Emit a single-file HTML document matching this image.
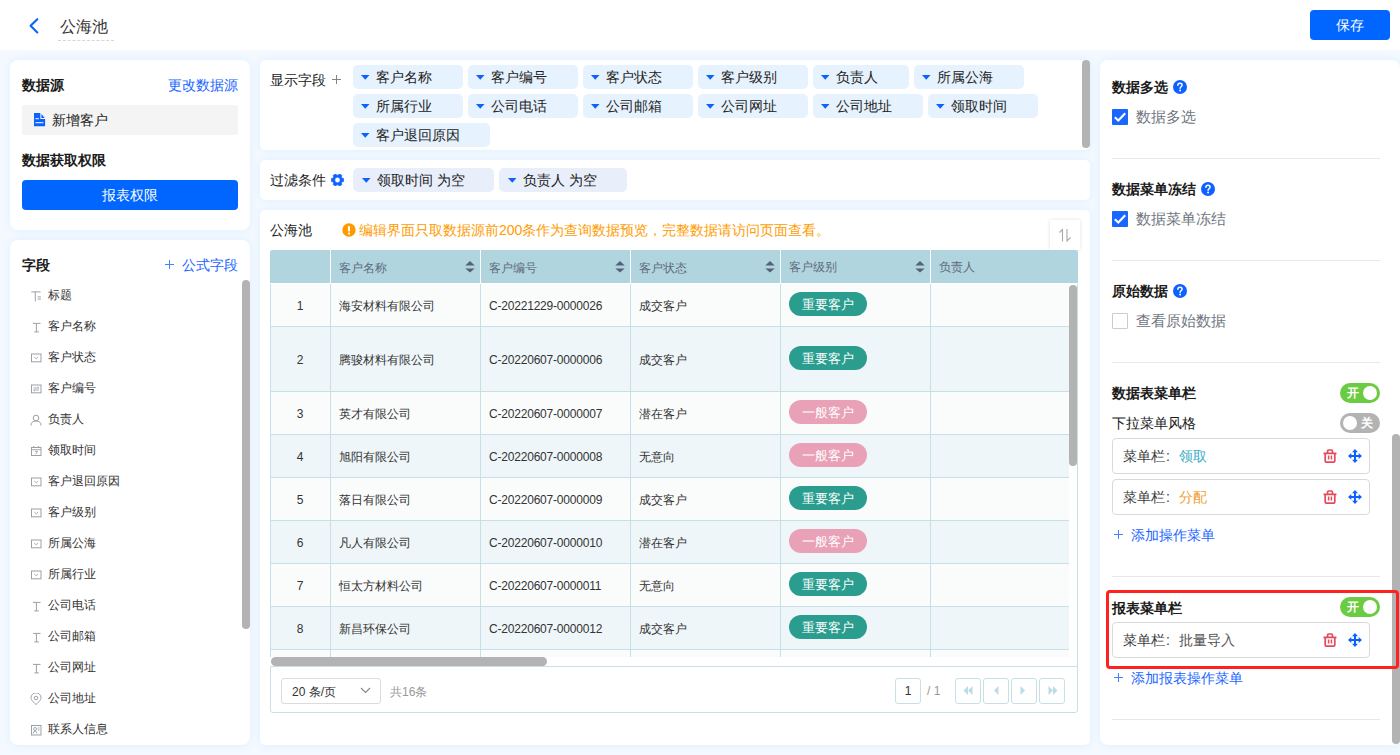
<!DOCTYPE html>
<html><head><meta charset="utf-8">
<style>
*{box-sizing:border-box;margin:0;padding:0}
html,body{width:1400px;height:755px;overflow:hidden}
body{background:#f3f9ff;font-family:"Liberation Sans",sans-serif;color:#333;position:relative}
.abs{position:absolute}
.t{position:absolute;white-space:nowrap;line-height:1}
#hdr{position:absolute;left:0;top:0;width:1400px;height:50px;background:#fff}
.code{letter-spacing:-0.2px}
.panel{position:absolute;background:#fff;box-shadow:0 0 8px rgba(0,140,255,0.09)}
</style></head><body>
<div id="hdr">
  <svg class="abs" style="left:27px;top:16px" width="14" height="19" viewBox="0 0 14 19"><path d="M10.3 3.2 L3.6 9.8 L10.3 16.4" fill="none" stroke="#0d62fe" stroke-width="2.1" stroke-linecap="round" stroke-linejoin="round"/></svg>
  <div class="t" style="left:60px;top:19px;font-size:16px;color:#333">公海池</div>
  <div class="abs" style="left:58px;top:40px;width:56px;height:0;border-top:1px dashed #d6d6d6"></div>
  <div class="abs" style="left:1310px;top:10px;width:80px;height:30px;background:#0066ff;border-radius:4px"></div>
  <div class="t" style="left:1336px;top:18px;font-size:14px;color:#fff">保存</div>
</div>

<!-- left panel 1 -->
<div class="panel" style="left:10px;top:60px;width:240px;height:170px;border-radius:8px"></div>
<!-- left panel 2 -->
<div class="panel" style="left:10px;top:240px;width:240px;height:505px;border-radius:8px"></div>
<!-- display fields -->
<div class="panel" style="left:260px;top:60px;width:830px;height:90px;border-radius:5px"></div>
<!-- filter -->
<div class="panel" style="left:260px;top:160px;width:830px;height:40px;border-radius:5px"></div>
<!-- table panel -->
<div class="panel" style="left:260px;top:210px;width:830px;height:535px;border-radius:5px"></div>
<!-- right panel -->
<div class="panel" style="left:1100px;top:60px;width:300px;height:685px;border-radius:8px"></div>


<!-- left panel 1 content -->
<div class="t" style="left:22px;top:78px;font-size:14px;font-weight:bold;color:#1a1a1a">数据源</div>
<div class="t" style="left:168px;top:78px;font-size:14px;color:#1a66ff">更改数据源</div>
<div class="abs" style="left:22px;top:105px;width:216px;height:30px;background:#f4f4f4;border-radius:2px"></div>
<svg class="abs" style="left:33.7px;top:112.8px" width="12" height="14" viewBox="0 0 12 14"><path d="M0 0 H6.3 V5.9 H11.1 V13.3 H0 Z" fill="#0d62fe"/><path d="M7.4 0.9 L10.7 4.9 H7.4 Z" fill="#0d62fe"/><rect x="1.4" y="5.2" width="3.5" height="1" fill="#fff"/><rect x="1.4" y="9.2" width="8" height="1" fill="#fff"/></svg>
<div class="t" style="left:52px;top:113px;font-size:14px;color:#222">新增客户</div>
<div class="t" style="left:22px;top:153px;font-size:14px;font-weight:bold;color:#1a1a1a">数据获取权限</div>
<div class="abs" style="left:22px;top:180px;width:216px;height:30px;background:#0066ff;border-radius:4px"></div>
<div class="t" style="left:102px;top:188px;font-size:14px;color:#fff">报表权限</div>
<!-- left panel 2 content -->
<div class="t" style="left:22px;top:258px;font-size:14px;font-weight:bold;color:#1a1a1a">字段</div>
<svg class="abs" style="left:165px;top:260px" width="9" height="9" viewBox="0 0 9 9"><path d="M4.5 0 V9 M0 4.5 H9" stroke="#4680ff" stroke-width="1"/></svg><div class="t" style="left:182px;top:258px;font-size:14px;color:#1a66ff">公式字段</div>
<div class="abs" style="left:242px;top:280px;width:8px;height:349px;background:#b3b3b3;border-radius:4px"></div>
<svg class="abs" style="left:30px;top:289.5px" width="12" height="12" viewBox="0 0 12 12"><path d="M1.3 1.9 H10.5 M5.3 1.9 V11.4 M7.6 6.9 H10.9 M7.6 9.1 H10.9" stroke="#9aa0a8" stroke-width="1" fill="none"/></svg><div class="t" style="left:48px;top:289.0px;font-size:12px;color:#333">标题</div>
<svg class="abs" style="left:30px;top:320.5px" width="12" height="12" viewBox="0 0 12 12"><path d="M3 2.4 H10.5 M6.4 2.4 V10.9 M4.3 10.9 H8.9" stroke="#9aa0a8" stroke-width="1" fill="none"/></svg><div class="t" style="left:48px;top:320.0px;font-size:12px;color:#333">客户名称</div>
<svg class="abs" style="left:30px;top:351.5px" width="12" height="12" viewBox="0 0 12 12"><rect x="1.5" y="2" width="9.5" height="7.8" stroke="#9aa0a8" stroke-width="1" fill="none"/><path d="M4.3 5 L6.25 6.8 L8.2 5" stroke="#9aa0a8" stroke-width="0.9" fill="none"/></svg><div class="t" style="left:48px;top:351.0px;font-size:12px;color:#333">客户状态</div>
<svg class="abs" style="left:30px;top:382.5px" width="12" height="12" viewBox="0 0 12 12"><rect x="1.5" y="2" width="9.5" height="7.8" stroke="#9aa0a8" stroke-width="1" fill="none"/><path d="M3.5 5 H9 L7.6 3.8 M9 7 H3.5 L4.9 8.2" stroke="#9aa0a8" stroke-width="0.9" fill="none"/></svg><div class="t" style="left:48px;top:382.0px;font-size:12px;color:#333">客户编号</div>
<svg class="abs" style="left:30px;top:413.5px" width="12" height="12" viewBox="0 0 12 12"><circle cx="6" cy="4" r="2.8" stroke="#9aa0a8" stroke-width="1" fill="none"/><path d="M1 11.5 Q1 7 6 7 Q11 7 11 11.5" stroke="#9aa0a8" stroke-width="1" fill="none"/></svg><div class="t" style="left:48px;top:413.0px;font-size:12px;color:#333">负责人</div>
<svg class="abs" style="left:30px;top:444.5px" width="12" height="12" viewBox="0 0 12 12"><rect x="1.5" y="2.5" width="9.5" height="8" stroke="#9aa0a8" stroke-width="1" fill="none"/><path d="M1.5 4.7 H11 M3.8 1 V3 M8.7 1 V3 M4.8 6.3 H7.5 L5.8 9.3" stroke="#9aa0a8" stroke-width="0.9" fill="none"/></svg><div class="t" style="left:48px;top:444.0px;font-size:12px;color:#333">领取时间</div>
<svg class="abs" style="left:30px;top:475.5px" width="12" height="12" viewBox="0 0 12 12"><rect x="1.5" y="2" width="9.5" height="7.8" stroke="#9aa0a8" stroke-width="1" fill="none"/><path d="M4.3 5 L6.25 6.8 L8.2 5" stroke="#9aa0a8" stroke-width="0.9" fill="none"/></svg><div class="t" style="left:48px;top:475.0px;font-size:12px;color:#333">客户退回原因</div>
<svg class="abs" style="left:30px;top:506.5px" width="12" height="12" viewBox="0 0 12 12"><rect x="1.5" y="2" width="9.5" height="7.8" stroke="#9aa0a8" stroke-width="1" fill="none"/><path d="M4.3 5 L6.25 6.8 L8.2 5" stroke="#9aa0a8" stroke-width="0.9" fill="none"/></svg><div class="t" style="left:48px;top:506.0px;font-size:12px;color:#333">客户级别</div>
<svg class="abs" style="left:30px;top:537.5px" width="12" height="12" viewBox="0 0 12 12"><rect x="1.5" y="2" width="9.5" height="7.8" stroke="#9aa0a8" stroke-width="1" fill="none"/><path d="M4.3 5 L6.25 6.8 L8.2 5" stroke="#9aa0a8" stroke-width="0.9" fill="none"/></svg><div class="t" style="left:48px;top:537.0px;font-size:12px;color:#333">所属公海</div>
<svg class="abs" style="left:30px;top:568.5px" width="12" height="12" viewBox="0 0 12 12"><rect x="1.5" y="2" width="9.5" height="7.8" stroke="#9aa0a8" stroke-width="1" fill="none"/><path d="M4.3 5 L6.25 6.8 L8.2 5" stroke="#9aa0a8" stroke-width="0.9" fill="none"/></svg><div class="t" style="left:48px;top:568.0px;font-size:12px;color:#333">所属行业</div>
<svg class="abs" style="left:30px;top:599.5px" width="12" height="12" viewBox="0 0 12 12"><path d="M3 2.4 H10.5 M6.4 2.4 V10.9 M4.3 10.9 H8.9" stroke="#9aa0a8" stroke-width="1" fill="none"/></svg><div class="t" style="left:48px;top:599.0px;font-size:12px;color:#333">公司电话</div>
<svg class="abs" style="left:30px;top:630.5px" width="12" height="12" viewBox="0 0 12 12"><path d="M3 2.4 H10.5 M6.4 2.4 V10.9 M4.3 10.9 H8.9" stroke="#9aa0a8" stroke-width="1" fill="none"/></svg><div class="t" style="left:48px;top:630.0px;font-size:12px;color:#333">公司邮箱</div>
<svg class="abs" style="left:30px;top:661.5px" width="12" height="12" viewBox="0 0 12 12"><path d="M3 2.4 H10.5 M6.4 2.4 V10.9 M4.3 10.9 H8.9" stroke="#9aa0a8" stroke-width="1" fill="none"/></svg><div class="t" style="left:48px;top:661.0px;font-size:12px;color:#333">公司网址</div>
<svg class="abs" style="left:30px;top:692.5px" width="12" height="12" viewBox="0 0 12 12"><path d="M6 11.5 C2 8 1 6 1 4.8 A5 5 0 0 1 11 4.8 C11 6 10 8 6 11.5 Z" stroke="#9aa0a8" stroke-width="1" fill="none"/><circle cx="6" cy="5" r="1.8" stroke="#9aa0a8" stroke-width="1" fill="none"/></svg><div class="t" style="left:48px;top:692.0px;font-size:12px;color:#333">公司地址</div>
<svg class="abs" style="left:30px;top:723.5px" width="12" height="12" viewBox="0 0 12 12"><rect x="1.5" y="1.5" width="9.5" height="9.5" stroke="#9aa0a8" stroke-width="1" fill="none"/><circle cx="5" cy="5" r="1.5" stroke="#9aa0a8" stroke-width="0.9" fill="none"/><path d="M3 9.5 Q3.3 7.3 5 7.3 Q6.7 7.3 7 9.5 M7.6 4 H9.5 M7.6 6 H9.5" stroke="#9aa0a8" stroke-width="0.9" fill="none"/></svg><div class="t" style="left:48px;top:723.0px;font-size:12px;color:#333">联系人信息</div>

<!-- display fields content -->
<div class="t" style="left:270px;top:73px;font-size:14px;color:#222">显示字段</div>
<svg class="abs" style="left:332px;top:75px" width="9" height="9" viewBox="0 0 9 9"><path d="M4.5 0 V9 M0 4.5 H9" stroke="#777" stroke-width="0.9"/></svg>
<div class="abs" style="left:1082px;top:60px;width:8px;height:88px;background:#b3b3b3;border-radius:4px"></div>
<div class="abs" style="left:353px;top:65px;width:110px;height:24px;background:#e6f2fe;border-radius:5px"></div><svg class="abs" style="left:361px;top:75px" width="9" height="5" viewBox="0 0 9 5"><path d="M0 0 H8.5 L4.25 4.8 Z" fill="#0d62fe"/></svg><div class="t" style="left:376px;top:70px;font-size:14px;color:#222">客户名称</div>
<div class="abs" style="left:468px;top:65px;width:110px;height:24px;background:#e6f2fe;border-radius:5px"></div><svg class="abs" style="left:476px;top:75px" width="9" height="5" viewBox="0 0 9 5"><path d="M0 0 H8.5 L4.25 4.8 Z" fill="#0d62fe"/></svg><div class="t" style="left:491px;top:70px;font-size:14px;color:#222">客户编号</div>
<div class="abs" style="left:583px;top:65px;width:110px;height:24px;background:#e6f2fe;border-radius:5px"></div><svg class="abs" style="left:591px;top:75px" width="9" height="5" viewBox="0 0 9 5"><path d="M0 0 H8.5 L4.25 4.8 Z" fill="#0d62fe"/></svg><div class="t" style="left:606px;top:70px;font-size:14px;color:#222">客户状态</div>
<div class="abs" style="left:698px;top:65px;width:110px;height:24px;background:#e6f2fe;border-radius:5px"></div><svg class="abs" style="left:706px;top:75px" width="9" height="5" viewBox="0 0 9 5"><path d="M0 0 H8.5 L4.25 4.8 Z" fill="#0d62fe"/></svg><div class="t" style="left:721px;top:70px;font-size:14px;color:#222">客户级别</div>
<div class="abs" style="left:813px;top:65px;width:96px;height:24px;background:#e6f2fe;border-radius:5px"></div><svg class="abs" style="left:821px;top:75px" width="9" height="5" viewBox="0 0 9 5"><path d="M0 0 H8.5 L4.25 4.8 Z" fill="#0d62fe"/></svg><div class="t" style="left:836px;top:70px;font-size:14px;color:#222">负责人</div>
<div class="abs" style="left:914px;top:65px;width:110px;height:24px;background:#e6f2fe;border-radius:5px"></div><svg class="abs" style="left:922px;top:75px" width="9" height="5" viewBox="0 0 9 5"><path d="M0 0 H8.5 L4.25 4.8 Z" fill="#0d62fe"/></svg><div class="t" style="left:937px;top:70px;font-size:14px;color:#222">所属公海</div>
<div class="abs" style="left:353px;top:94px;width:110px;height:24px;background:#e6f2fe;border-radius:5px"></div><svg class="abs" style="left:361px;top:104px" width="9" height="5" viewBox="0 0 9 5"><path d="M0 0 H8.5 L4.25 4.8 Z" fill="#0d62fe"/></svg><div class="t" style="left:376px;top:99px;font-size:14px;color:#222">所属行业</div>
<div class="abs" style="left:468px;top:94px;width:110px;height:24px;background:#e6f2fe;border-radius:5px"></div><svg class="abs" style="left:476px;top:104px" width="9" height="5" viewBox="0 0 9 5"><path d="M0 0 H8.5 L4.25 4.8 Z" fill="#0d62fe"/></svg><div class="t" style="left:491px;top:99px;font-size:14px;color:#222">公司电话</div>
<div class="abs" style="left:583px;top:94px;width:110px;height:24px;background:#e6f2fe;border-radius:5px"></div><svg class="abs" style="left:591px;top:104px" width="9" height="5" viewBox="0 0 9 5"><path d="M0 0 H8.5 L4.25 4.8 Z" fill="#0d62fe"/></svg><div class="t" style="left:606px;top:99px;font-size:14px;color:#222">公司邮箱</div>
<div class="abs" style="left:698px;top:94px;width:110px;height:24px;background:#e6f2fe;border-radius:5px"></div><svg class="abs" style="left:706px;top:104px" width="9" height="5" viewBox="0 0 9 5"><path d="M0 0 H8.5 L4.25 4.8 Z" fill="#0d62fe"/></svg><div class="t" style="left:721px;top:99px;font-size:14px;color:#222">公司网址</div>
<div class="abs" style="left:813px;top:94px;width:110px;height:24px;background:#e6f2fe;border-radius:5px"></div><svg class="abs" style="left:821px;top:104px" width="9" height="5" viewBox="0 0 9 5"><path d="M0 0 H8.5 L4.25 4.8 Z" fill="#0d62fe"/></svg><div class="t" style="left:836px;top:99px;font-size:14px;color:#222">公司地址</div>
<div class="abs" style="left:928px;top:94px;width:110px;height:24px;background:#e6f2fe;border-radius:5px"></div><svg class="abs" style="left:936px;top:104px" width="9" height="5" viewBox="0 0 9 5"><path d="M0 0 H8.5 L4.25 4.8 Z" fill="#0d62fe"/></svg><div class="t" style="left:951px;top:99px;font-size:14px;color:#222">领取时间</div>
<div class="abs" style="left:353px;top:123px;width:137px;height:24px;background:#e6f2fe;border-radius:5px"></div><svg class="abs" style="left:361px;top:133px" width="9" height="5" viewBox="0 0 9 5"><path d="M0 0 H8.5 L4.25 4.8 Z" fill="#0d62fe"/></svg><div class="t" style="left:376px;top:128px;font-size:14px;color:#222">客户退回原因</div>

<div class="t" style="left:270px;top:173px;font-size:14px;color:#222">过滤条件</div>
<svg class="abs" style="left:331px;top:174px" width="13" height="12" viewBox="0 0 13 12"><path fill="#0d62fe" fill-rule="evenodd" stroke="#0d62fe" stroke-width="0.6" stroke-linejoin="round" d="M11.04 4.16 L12.71 4.45 L12.71 7.55 L11.04 7.84 L10.36 9.02 L10.95 10.60 L8.26 12.15 L7.18 10.85 L5.82 10.85 L4.74 12.15 L2.05 10.60 L2.64 9.02 L1.96 7.84 L0.29 7.55 L0.29 4.45 L1.96 4.16 L2.64 2.98 L2.05 1.40 L4.74 -0.15 L5.82 1.15 L7.18 1.15 L8.26 -0.15 L10.95 1.40 L10.36 2.98 Z M6.5 3.3 A2.7 2.7 0 1 0 6.5 8.7 A2.7 2.7 0 1 0 6.5 3.3 Z"/></svg>
<div class="abs" style="left:353px;top:168px;width:141px;height:24px;background:#e8eefa;border-radius:5px"></div><svg class="abs" style="left:362px;top:178px" width="9" height="5" viewBox="0 0 9 5"><path d="M0 0 H8.5 L4.25 4.8 Z" fill="#0d62fe"/></svg><div class="t" style="left:377px;top:173px;font-size:14px;color:#222">领取时间 为空</div>
<div class="abs" style="left:499px;top:168px;width:128px;height:24px;background:#e8eefa;border-radius:5px"></div><svg class="abs" style="left:508px;top:178px" width="9" height="5" viewBox="0 0 9 5"><path d="M0 0 H8.5 L4.25 4.8 Z" fill="#0d62fe"/></svg><div class="t" style="left:523px;top:173px;font-size:14px;color:#222">负责人 为空</div>

<!-- table panel content -->
<div class="t" style="left:270px;top:223px;font-size:14px;color:#222">公海池</div>
<svg class="abs" style="left:342px;top:223px" width="14" height="14" viewBox="0 0 14 14"><circle cx="7" cy="7" r="6.7" fill="#ff9a00"/><rect x="6" y="3" width="2" height="5.5" rx="0.8" fill="#fff"/><circle cx="7" cy="10.6" r="1.1" fill="#fff"/></svg>
<div class="t" style="left:359px;top:223px;font-size:14px;color:#ff9c00">编辑界面只取数据源前200条作为查询数据预览，完整数据请访问页面查看。</div>
<div class="abs" style="left:1050px;top:220px;width:30px;height:30px;background:#fff;box-shadow:0 0 4px rgba(0,0,0,0.12)"></div>
<svg class="abs" style="left:1057px;top:227px" width="16" height="16" viewBox="0 0 16 16"><path d="M5.5 14.5 V2.5 L2.5 5.5 M10 2 V14 L13.5 10.5" stroke="#a8a8a8" stroke-width="1.1" fill="none"/></svg>
<!-- table frame -->
<div class="abs" style="left:270px;top:250px;width:808px;height:463px;overflow:hidden">
 <div class="abs" style="left:0;top:0;width:808px;height:33px;background:#b0d5de;border-radius:2px 2px 0 0"></div>
<div class="abs" style="left:60px;top:0;width:1px;height:33px;background:#fff"></div><div class="abs" style="left:210px;top:0;width:1px;height:33px;background:#fff"></div><div class="abs" style="left:360px;top:0;width:1px;height:33px;background:#fff"></div><div class="abs" style="left:510px;top:0;width:1px;height:33px;background:#fff"></div><div class="abs" style="left:660px;top:0;width:1px;height:33px;background:#fff"></div><div class="t" style="left:69px;top:12.0px;font-size:12px;color:#5f6a7c">客户名称</div><svg class="abs" style="left:195px;top:10.5px" width="10" height="12" viewBox="0 0 10 12"><path d="M0.3 4.4 L5 0 L9.7 4.4 Z M0.3 7.4 L5 11.6 L9.7 7.4 Z" fill="#56607a"/></svg><div class="t" style="left:219px;top:12.0px;font-size:12px;color:#5f6a7c">客户编号</div><svg class="abs" style="left:345px;top:10.5px" width="10" height="12" viewBox="0 0 10 12"><path d="M0.3 4.4 L5 0 L9.7 4.4 Z M0.3 7.4 L5 11.6 L9.7 7.4 Z" fill="#56607a"/></svg><div class="t" style="left:369px;top:12.0px;font-size:12px;color:#5f6a7c">客户状态</div><svg class="abs" style="left:495px;top:10.5px" width="10" height="12" viewBox="0 0 10 12"><path d="M0.3 4.4 L5 0 L9.7 4.4 Z M0.3 7.4 L5 11.6 L9.7 7.4 Z" fill="#56607a"/></svg><div class="t" style="left:519px;top:11px;font-size:12px;color:#5f6a7c">客户级别</div><svg class="abs" style="left:645px;top:10.5px" width="10" height="12" viewBox="0 0 10 12"><path d="M0.3 4.4 L5 0 L9.7 4.4 Z M0.3 7.4 L5 11.6 L9.7 7.4 Z" fill="#56607a"/></svg><div class="t" style="left:669px;top:11px;font-size:12px;color:#5f6a7c">负责人</div><div class="abs" style="left:0;top:34px;width:808px;height:373px;overflow:hidden"><div class="abs" style="left:0;top:0px;width:799px;height:43px;background:#fafcfc;border-bottom:1px solid #c6e0e6"></div><div class="t" style="left:0;width:60px;text-align:center;top:16.0px;font-size:12px;color:#333">1</div><div class="t" style="left:69px;top:16.0px;font-size:12px;color:#333">海安材料有限公司</div><div class="t code" style="left:219px;top:16.0px;font-size:12px;color:#333">C-20221229-0000026</div><div class="t" style="left:369px;top:16.0px;font-size:12px;color:#333">成交客户</div><div class="abs" style="left:519px;top:7.5px;width:78px;height:24px;border-radius:12px;background:#2a9d8f"></div><div class="t" style="left:519px;width:78px;text-align:center;top:13.5px;font-size:13px;color:#fff">重要客户</div><div class="abs" style="left:0;top:43px;width:799px;height:65px;background:#eff6f9;border-bottom:1px solid #c6e0e6"></div><div class="t" style="left:0;width:60px;text-align:center;top:70.0px;font-size:12px;color:#333">2</div><div class="t" style="left:69px;top:70.0px;font-size:12px;color:#333">腾骏材料有限公司</div><div class="t code" style="left:219px;top:70.0px;font-size:12px;color:#333">C-20220607-0000006</div><div class="t" style="left:369px;top:70.0px;font-size:12px;color:#333">成交客户</div><div class="abs" style="left:519px;top:61.5px;width:78px;height:24px;border-radius:12px;background:#2a9d8f"></div><div class="t" style="left:519px;width:78px;text-align:center;top:67.5px;font-size:13px;color:#fff">重要客户</div><div class="abs" style="left:0;top:108px;width:799px;height:43px;background:#fafcfc;border-bottom:1px solid #c6e0e6"></div><div class="t" style="left:0;width:60px;text-align:center;top:124.0px;font-size:12px;color:#333">3</div><div class="t" style="left:69px;top:124.0px;font-size:12px;color:#333">英才有限公司</div><div class="t code" style="left:219px;top:124.0px;font-size:12px;color:#333">C-20220607-0000007</div><div class="t" style="left:369px;top:124.0px;font-size:12px;color:#333">潜在客户</div><div class="abs" style="left:519px;top:115.5px;width:78px;height:24px;border-radius:12px;background:#e8a1b6"></div><div class="t" style="left:519px;width:78px;text-align:center;top:121.5px;font-size:13px;color:#fff">一般客户</div><div class="abs" style="left:0;top:151px;width:799px;height:43px;background:#eff6f9;border-bottom:1px solid #c6e0e6"></div><div class="t" style="left:0;width:60px;text-align:center;top:167.0px;font-size:12px;color:#333">4</div><div class="t" style="left:69px;top:167.0px;font-size:12px;color:#333">旭阳有限公司</div><div class="t code" style="left:219px;top:167.0px;font-size:12px;color:#333">C-20220607-0000008</div><div class="t" style="left:369px;top:167.0px;font-size:12px;color:#333">无意向</div><div class="abs" style="left:519px;top:158.5px;width:78px;height:24px;border-radius:12px;background:#e8a1b6"></div><div class="t" style="left:519px;width:78px;text-align:center;top:164.5px;font-size:13px;color:#fff">一般客户</div><div class="abs" style="left:0;top:194px;width:799px;height:43px;background:#fafcfc;border-bottom:1px solid #c6e0e6"></div><div class="t" style="left:0;width:60px;text-align:center;top:210.0px;font-size:12px;color:#333">5</div><div class="t" style="left:69px;top:210.0px;font-size:12px;color:#333">落日有限公司</div><div class="t code" style="left:219px;top:210.0px;font-size:12px;color:#333">C-20220607-0000009</div><div class="t" style="left:369px;top:210.0px;font-size:12px;color:#333">成交客户</div><div class="abs" style="left:519px;top:201.5px;width:78px;height:24px;border-radius:12px;background:#2a9d8f"></div><div class="t" style="left:519px;width:78px;text-align:center;top:207.5px;font-size:13px;color:#fff">重要客户</div><div class="abs" style="left:0;top:237px;width:799px;height:43px;background:#eff6f9;border-bottom:1px solid #c6e0e6"></div><div class="t" style="left:0;width:60px;text-align:center;top:253.0px;font-size:12px;color:#333">6</div><div class="t" style="left:69px;top:253.0px;font-size:12px;color:#333">凡人有限公司</div><div class="t code" style="left:219px;top:253.0px;font-size:12px;color:#333">C-20220607-0000010</div><div class="t" style="left:369px;top:253.0px;font-size:12px;color:#333">潜在客户</div><div class="abs" style="left:519px;top:244.5px;width:78px;height:24px;border-radius:12px;background:#e8a1b6"></div><div class="t" style="left:519px;width:78px;text-align:center;top:250.5px;font-size:13px;color:#fff">一般客户</div><div class="abs" style="left:0;top:280px;width:799px;height:43px;background:#fafcfc;border-bottom:1px solid #c6e0e6"></div><div class="t" style="left:0;width:60px;text-align:center;top:296.0px;font-size:12px;color:#333">7</div><div class="t" style="left:69px;top:296.0px;font-size:12px;color:#333">恒太方材料公司</div><div class="t code" style="left:219px;top:296.0px;font-size:12px;color:#333">C-20220607-0000011</div><div class="t" style="left:369px;top:296.0px;font-size:12px;color:#333">无意向</div><div class="abs" style="left:519px;top:287.5px;width:78px;height:24px;border-radius:12px;background:#2a9d8f"></div><div class="t" style="left:519px;width:78px;text-align:center;top:293.5px;font-size:13px;color:#fff">重要客户</div><div class="abs" style="left:0;top:323px;width:799px;height:43px;background:#eff6f9;border-bottom:1px solid #c6e0e6"></div><div class="t" style="left:0;width:60px;text-align:center;top:339.0px;font-size:12px;color:#333">8</div><div class="t" style="left:69px;top:339.0px;font-size:12px;color:#333">新昌环保公司</div><div class="t code" style="left:219px;top:339.0px;font-size:12px;color:#333">C-20220607-0000012</div><div class="t" style="left:369px;top:339.0px;font-size:12px;color:#333">成交客户</div><div class="abs" style="left:519px;top:330.5px;width:78px;height:24px;border-radius:12px;background:#2a9d8f"></div><div class="t" style="left:519px;width:78px;text-align:center;top:336.5px;font-size:13px;color:#fff">重要客户</div><div class="abs" style="left:0;top:366px;width:799px;height:43px;background:#fafcfc;border-bottom:1px solid #c6e0e6"></div><div class="abs" style="left:60px;top:0;width:1px;height:374px;background:#c6e0e6"></div><div class="abs" style="left:210px;top:0;width:1px;height:374px;background:#c6e0e6"></div><div class="abs" style="left:360px;top:0;width:1px;height:374px;background:#c6e0e6"></div><div class="abs" style="left:510px;top:0;width:1px;height:374px;background:#c6e0e6"></div><div class="abs" style="left:660px;top:0;width:1px;height:374px;background:#c6e0e6"></div><div class="abs" style="left:0;top:0;width:1px;height:374px;background:#c6e0e6"></div><div class="abs" style="left:799px;top:1px;width:8px;height:181px;background:#b3b3b3;border-radius:4px"></div><div class="abs" style="left:807px;top:0;width:1px;height:373px;background:#c6e0e6"></div></div><div class="abs" style="left:1px;top:407px;width:276px;height:9px;background:#b3b3b3;border-radius:4.5px"></div><div class="abs" style="left:807px;top:407px;width:1px;height:9px;background:#c6e0e6"></div><div class="abs" style="left:0;top:416px;width:808px;height:47px;border:1px solid #c6e0e6;border-radius:0 0 3px 3px"></div></div>
<div class="abs" style="left:281px;top:678px;width:100px;height:26px;border:1px solid #dcdcdc;border-radius:3px;background:#fff"></div>
<div class="t" style="left:292px;top:685.5px;font-size:12px;color:#333">20 条/页</div>
<svg class="abs" style="left:360px;top:687px" width="11" height="7" viewBox="0 0 11 7"><path d="M1 1 L5.5 5.5 L10 1" stroke="#888" stroke-width="1.1" fill="none"/></svg>
<div class="t" style="left:390px;top:685.5px;font-size:12px;color:#999">共16条</div>
<div class="abs" style="left:895px;top:678px;width:26px;height:26px;border:1px solid #c6e0e6;border-radius:3px;background:#fff"></div>
<div class="t" style="left:895px;width:26px;text-align:center;top:685px;font-size:12px;color:#333">1</div>
<div class="t" style="left:927px;top:685px;font-size:12px;color:#999">/ 1</div>
<div class="abs" style="left:955px;top:678px;width:26px;height:26px;border:1px solid #c6e0e6;border-radius:3px;background:#fff"></div><div class="abs" style="left:983px;top:678px;width:26px;height:26px;border:1px solid #c6e0e6;border-radius:3px;background:#fff"></div><div class="abs" style="left:1011px;top:678px;width:26px;height:26px;border:1px solid #c6e0e6;border-radius:3px;background:#fff"></div><div class="abs" style="left:1039px;top:678px;width:26px;height:26px;border:1px solid #c6e0e6;border-radius:3px;background:#fff"></div><svg class="abs" style="left:963px;top:686px" width="10" height="9" viewBox="0 0 10 9"><path d="M5 0 L0.5 4.5 L5 9 Z M9.5 0 L5 4.5 L9.5 9 Z" fill="#bcdce3"/></svg><svg class="abs" style="left:993px;top:686px" width="6" height="9" viewBox="0 0 6 9"><path d="M5.5 0 L1 4.5 L5.5 9 Z" fill="#bcdce3"/></svg><svg class="abs" style="left:1020px;top:686px" width="6" height="9" viewBox="0 0 6 9"><path d="M0.5 0 L5 4.5 L0.5 9 Z" fill="#bcdce3"/></svg><svg class="abs" style="left:1048px;top:686px" width="10" height="9" viewBox="0 0 10 9"><path d="M0.5 0 L5 4.5 L0.5 9 Z M5 0 L9.5 4.5 L5 9 Z" fill="#bcdce3"/></svg>

<!-- right panel content -->
<div class="t" style="left:1112px;top:80px;font-size:14px;font-weight:bold;color:#1a1a1a">数据多选</div><svg class="abs" style="left:1173px;top:80px" width="14" height="14" viewBox="0 0 14 14"><circle cx="7" cy="7" r="7" fill="#0d62fe"/><path d="M4.9 5.3 Q4.9 3.2 7 3.2 Q9.1 3.2 9.1 5.1 Q9.1 6.2 8 6.8 Q7.1 7.3 7.1 8.3" stroke="#fff" stroke-width="1.5" fill="none" stroke-linecap="round"/><circle cx="7.1" cy="10.5" r="0.95" fill="#fff"/></svg><svg class="abs" style="left:1112px;top:109px" width="16" height="16" viewBox="0 0 16 16"><rect x="0" y="0" width="16" height="16" rx="1" fill="#1a66ff"/><path d="M2.8 8.2 L6.3 11.5 L13.2 4.3" stroke="#fff" stroke-width="2.1" fill="none"/></svg><div class="t" style="left:1136px;top:110px;font-size:14.5px;color:#707680">数据多选</div>
<div class="t" style="left:1112px;top:182px;font-size:14px;font-weight:bold;color:#1a1a1a">数据菜单冻结</div><svg class="abs" style="left:1201px;top:182px" width="14" height="14" viewBox="0 0 14 14"><circle cx="7" cy="7" r="7" fill="#0d62fe"/><path d="M4.9 5.3 Q4.9 3.2 7 3.2 Q9.1 3.2 9.1 5.1 Q9.1 6.2 8 6.8 Q7.1 7.3 7.1 8.3" stroke="#fff" stroke-width="1.5" fill="none" stroke-linecap="round"/><circle cx="7.1" cy="10.5" r="0.95" fill="#fff"/></svg><svg class="abs" style="left:1112px;top:211px" width="16" height="16" viewBox="0 0 16 16"><rect x="0" y="0" width="16" height="16" rx="1" fill="#1a66ff"/><path d="M2.8 8.2 L6.3 11.5 L13.2 4.3" stroke="#fff" stroke-width="2.1" fill="none"/></svg><div class="t" style="left:1136px;top:212px;font-size:14.5px;color:#707680">数据菜单冻结</div>
<div class="t" style="left:1112px;top:284px;font-size:14px;font-weight:bold;color:#1a1a1a">原始数据</div><svg class="abs" style="left:1173px;top:284px" width="14" height="14" viewBox="0 0 14 14"><circle cx="7" cy="7" r="7" fill="#0d62fe"/><path d="M4.9 5.3 Q4.9 3.2 7 3.2 Q9.1 3.2 9.1 5.1 Q9.1 6.2 8 6.8 Q7.1 7.3 7.1 8.3" stroke="#fff" stroke-width="1.5" fill="none" stroke-linecap="round"/><circle cx="7.1" cy="10.5" r="0.95" fill="#fff"/></svg><div class="abs" style="left:1112px;top:313px;width:16px;height:16px;border:1px solid #c9ccd1;border-radius:1px;background:#fff"></div><div class="t" style="left:1136px;top:314px;font-size:14.5px;color:#707680">查看原始数据</div>
<div class="abs" style="left:1112px;top:158px;width:268px;height:1px;background:#e8e8e8"></div><div class="abs" style="left:1112px;top:260px;width:268px;height:1px;background:#e8e8e8"></div><div class="abs" style="left:1112px;top:362px;width:268px;height:1px;background:#e8e8e8"></div><div class="abs" style="left:1112px;top:576px;width:268px;height:1px;background:#e8e8e8"></div><div class="abs" style="left:1112px;top:719px;width:268px;height:1px;background:#e8e8e8"></div><div class="t" style="left:1112px;top:386px;font-size:14px;font-weight:bold;color:#1a1a1a">数据表菜单栏</div><div class="abs" style="left:1340px;top:383px;width:40px;height:20px;border-radius:10px;background:#6bcb42"></div><div class="abs" style="left:1363.0px;top:386.0px;width:14px;height:14px;border-radius:50%;background:#fff"></div><div class="t" style="left:1347px;top:386.5px;font-size:12px;font-weight:bold;color:#fff">开</div><div class="t" style="left:1112px;top:416px;font-size:14px;color:#1a1a1a">下拉菜单风格</div><div class="abs" style="left:1340px;top:413px;width:40px;height:20px;border-radius:10px;background:#b3b3b3"></div><div class="abs" style="left:1343.0px;top:416.0px;width:14px;height:14px;border-radius:50%;background:#fff"></div><div class="t" style="left:1361px;top:416.5px;font-size:12px;font-weight:bold;color:#fff">关</div><div class="abs" style="left:1112px;top:438px;width:258px;height:36px;border:1px solid #d9d9d9;border-radius:4px;background:#fff"></div><div class="t" style="left:1123px;top:449px;font-size:14px;color:#3c3c3c">菜单栏<span style="display:inline-block;width:14px;padding-left:1px">:</span><span style="color:#3aaec6">领取</span></div><svg class="abs" style="left:1323px;top:448.5px" width="14" height="14" viewBox="0 0 14 14"><path d="M4.6 4 V2 Q4.6 1 5.6 1 H8.4 Q9.4 1 9.4 2 V4 M0.5 4.3 H13.5 M2.2 4.3 V12 Q2.2 13.2 3.4 13.2 H10.6 Q11.8 13.2 11.8 12 V4.3" stroke="#e6495c" stroke-width="1.7" fill="none"/><path d="M5.6 6.6 V10.6 M8.4 6.6 V10.6" stroke="#e6495c" stroke-width="1.5"/></svg><svg class="abs" style="left:1348px;top:448.5px" width="14" height="14" viewBox="0 0 14 14"><path d="M7 2.5 V11.5 M2.5 7 H11.5" stroke="#0d62fe" stroke-width="2"/><path d="M7 0 L10 3.3 H4 Z M7 14 L10 10.7 H4 Z M0 7 L3.3 4 V10 Z M14 7 L10.7 4 V10 Z" fill="#0d62fe"/></svg><div class="abs" style="left:1112px;top:479px;width:258px;height:36px;border:1px solid #d9d9d9;border-radius:4px;background:#fff"></div><div class="t" style="left:1123px;top:490px;font-size:14px;color:#3c3c3c">菜单栏<span style="display:inline-block;width:14px;padding-left:1px">:</span><span style="color:#f0a030">分配</span></div><svg class="abs" style="left:1323px;top:489.5px" width="14" height="14" viewBox="0 0 14 14"><path d="M4.6 4 V2 Q4.6 1 5.6 1 H8.4 Q9.4 1 9.4 2 V4 M0.5 4.3 H13.5 M2.2 4.3 V12 Q2.2 13.2 3.4 13.2 H10.6 Q11.8 13.2 11.8 12 V4.3" stroke="#e6495c" stroke-width="1.7" fill="none"/><path d="M5.6 6.6 V10.6 M8.4 6.6 V10.6" stroke="#e6495c" stroke-width="1.5"/></svg><svg class="abs" style="left:1348px;top:489.5px" width="14" height="14" viewBox="0 0 14 14"><path d="M7 2.5 V11.5 M2.5 7 H11.5" stroke="#0d62fe" stroke-width="2"/><path d="M7 0 L10 3.3 H4 Z M7 14 L10 10.7 H4 Z M0 7 L3.3 4 V10 Z M14 7 L10.7 4 V10 Z" fill="#0d62fe"/></svg><svg class="abs" style="left:1114px;top:530px" width="9" height="9" viewBox="0 0 9 9"><path d="M4.5 0 V9 M0 4.5 H9" stroke="#4680ff" stroke-width="1"/></svg><div class="t" style="left:1131px;top:528px;font-size:14px;color:#1a66ff">添加操作菜单</div><div class="t" style="left:1112px;top:601px;font-size:14px;font-weight:bold;color:#1a1a1a">报表菜单栏</div><div class="abs" style="left:1340px;top:597px;width:40px;height:20px;border-radius:10px;background:#6bcb42"></div><div class="abs" style="left:1363.0px;top:600.0px;width:14px;height:14px;border-radius:50%;background:#fff"></div><div class="t" style="left:1347px;top:600.5px;font-size:12px;font-weight:bold;color:#fff">开</div><div class="abs" style="left:1112px;top:622px;width:258px;height:36px;border:1px solid #d9d9d9;border-radius:4px;background:#fff"></div><div class="t" style="left:1123px;top:633px;font-size:14px;color:#3c3c3c">菜单栏<span style="display:inline-block;width:14px;padding-left:1px">:</span><span style="color:#555">批量导入</span></div><svg class="abs" style="left:1323px;top:632.5px" width="14" height="14" viewBox="0 0 14 14"><path d="M4.6 4 V2 Q4.6 1 5.6 1 H8.4 Q9.4 1 9.4 2 V4 M0.5 4.3 H13.5 M2.2 4.3 V12 Q2.2 13.2 3.4 13.2 H10.6 Q11.8 13.2 11.8 12 V4.3" stroke="#e6495c" stroke-width="1.7" fill="none"/><path d="M5.6 6.6 V10.6 M8.4 6.6 V10.6" stroke="#e6495c" stroke-width="1.5"/></svg><svg class="abs" style="left:1348px;top:632.5px" width="14" height="14" viewBox="0 0 14 14"><path d="M7 2.5 V11.5 M2.5 7 H11.5" stroke="#0d62fe" stroke-width="2"/><path d="M7 0 L10 3.3 H4 Z M7 14 L10 10.7 H4 Z M0 7 L3.3 4 V10 Z M14 7 L10.7 4 V10 Z" fill="#0d62fe"/></svg><svg class="abs" style="left:1114px;top:673px" width="9" height="9" viewBox="0 0 9 9"><path d="M4.5 0 V9 M0 4.5 H9" stroke="#4680ff" stroke-width="1"/></svg><div class="t" style="left:1131px;top:671px;font-size:14px;color:#1a66ff">添加报表操作菜单</div><div class="abs" style="left:1392px;top:434px;width:8px;height:310px;background:#b3b3b3;border-radius:4px"></div><div class="abs" style="left:1106px;top:590px;width:293px;height:79px;border:3px solid #ff2020;border-radius:4px"></div>
</body></html>
